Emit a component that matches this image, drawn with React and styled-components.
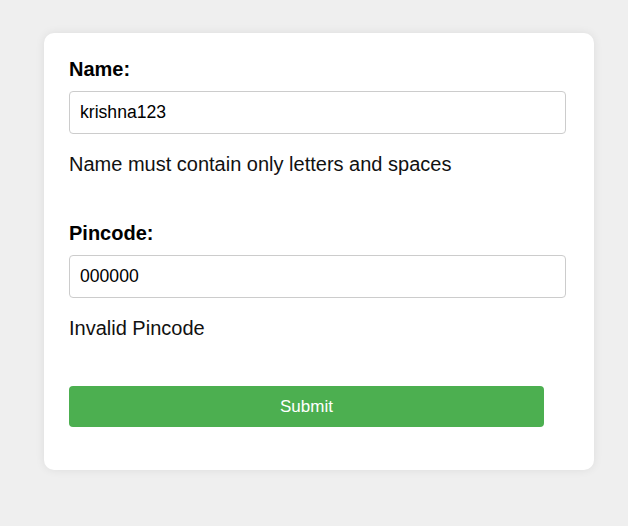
import styled, { createGlobalStyle } from "styled-components"

const Global = createGlobalStyle`
  body{
    margin: 0;
    background: #efefef;
    font-family: "Liberation Sans", Arial, sans-serif;
  }
`

const Page = styled.div`
  padding: 33px 0 56px 44px;
`

const Card = styled.form`
  width: 500px;
  padding: 25px;
  background: #fff;
  border-radius: 10px;
  box-shadow: 0 0 10px rgba(0, 0, 0, 0.08);
`

const Field = styled.div`
  margin-bottom: 46px;
`

const Label = styled.label`
  display: block;
  font-size: 20px;
  font-weight: 700;
  color: #000;
  margin-bottom: 10px;
`

const Input = styled.input`
  width: 95%;
  padding: 10px;
  font-size: 17.6px;
  font-family: inherit;
  color: #000;
  border: 1px solid #ccc;
  border-radius: 4px;
  outline: none;
  margin: 0;
`

const Error = styled.p`
  margin: 19px 0 0;
  font-size: 20px;
  color: #111;
`

const Button = styled.button`
  display: block;
  width: 95%;
  height: 41px;
  margin: 0 0 18px;
  background: #4caf50;
  color: #fff;
  border: none;
  border-radius: 4px;
  font-size: 17px;
  font-family: inherit;
`

const App = () => {
  return (
    <>
      <Global />
      <Page>
        <Card onSubmit={(e) => e.preventDefault()}>
          <Field>
            <Label>Name:</Label>
            <Input defaultValue="krishna123" />
            <Error>Name must contain only letters and spaces</Error>
          </Field>
          <Field>
            <Label>Pincode:</Label>
            <Input defaultValue="000000" />
            <Error>Invalid Pincode</Error>
          </Field>
          <Button type="submit">Submit</Button>
        </Card>
      </Page>
    </>
  )
}

export default App
